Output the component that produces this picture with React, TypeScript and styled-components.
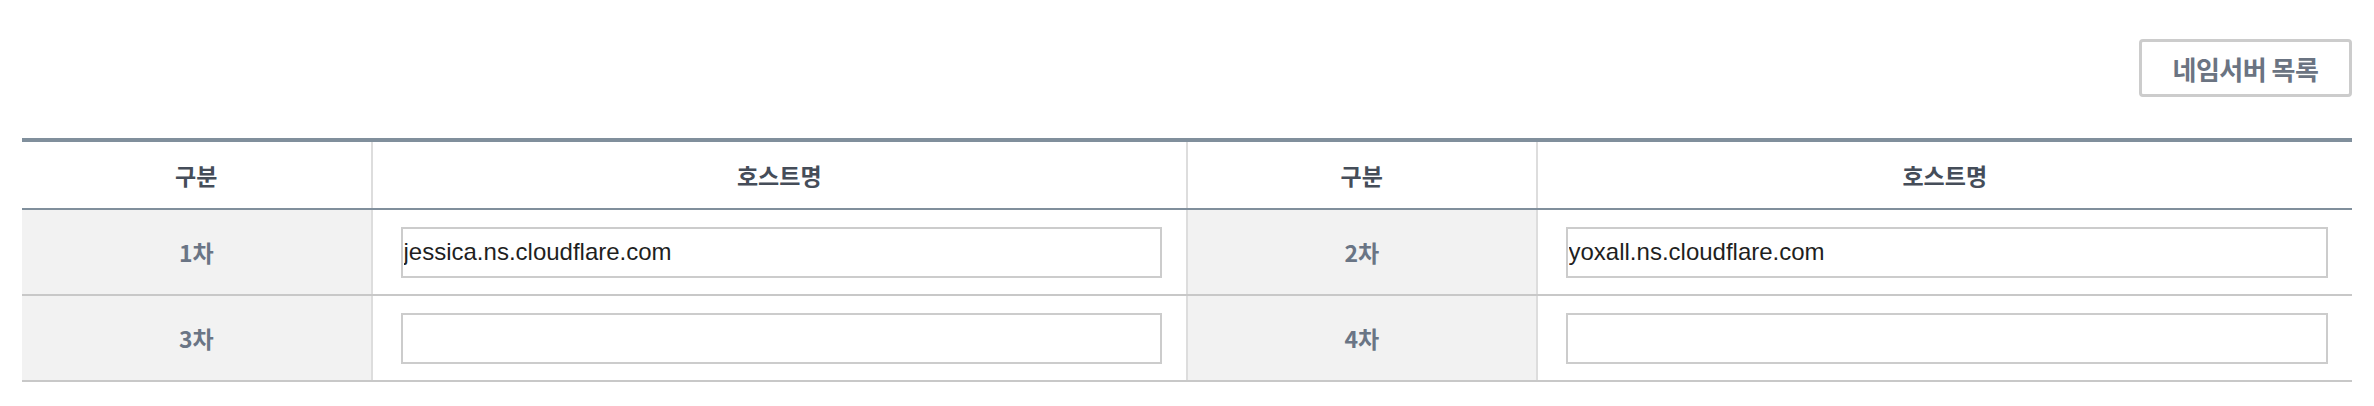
import React from "react";
import styled, { createGlobalStyle } from "styled-components";

const GlobalStyle = createGlobalStyle`
  html, body { margin: 0; padding: 0; background: #ffffff; }
  body { font-family: "Liberation Sans", "Noto Sans CJK KR", sans-serif; }
`;

const Page = styled.div`
  padding: 39px 22px 0 22px;
`;

const Toolbar = styled.div`
  display: flex;
  justify-content: flex-end;
  margin-bottom: 41px;
`;

const ListButton = styled.button`
  box-sizing: border-box;
  width: 213px;
  height: 58px;
  border: 3px solid #cccccc;
  border-radius: 4px;
  background: #ffffff;
  color: #6b7482;
  font-family: "Noto Sans CJK KR", sans-serif;
  font-weight: 700;
  font-size: 26px;
  letter-spacing: -0.5px;
  padding: 0;
  cursor: pointer;
`;

const Table = styled.table`
  width: 100%;
  border-collapse: collapse;
  table-layout: fixed;
  border-top: 4px solid #808f9c;
`;

const HeadCell = styled.th`
  height: 66px;
  padding: 0;
  background: #ffffff;
  border-bottom: 2px solid #808f9c;
  border-left: 2px solid #dddddd;
  color: #454d59;
  font-family: "Noto Sans CJK KR", sans-serif;
  font-weight: 700;
  font-size: 23px;
  text-align: center;
  vertical-align: middle;
  &:first-child { border-left: none; }
`;

const LabelCell = styled.td`
  height: 84px;
  padding: 0;
  background: #f2f2f2;
  border-bottom: 2px solid #c8c8c8;
  border-left: 2px solid #dddddd;
  color: #6a7585;
  font-family: "Noto Sans CJK KR", sans-serif;
  font-weight: 700;
  font-size: 23px;
  text-align: center;
  vertical-align: middle;
  &:first-child { border-left: none; }
`;

const FieldCell = styled.td`
  height: 84px;
  padding: 0 24px 0 28px;
  background: #ffffff;
  border-bottom: 2px solid #c8c8c8;
  border-left: 2px solid #dddddd;
  vertical-align: middle;
`;

const HostInput = styled.input`
  box-sizing: border-box;
  display: block;
  width: 100%;
  height: 51px;
  margin: 0;
  padding: 0 1px;
  border: 2px solid #cccccc;
  border-radius: 0;
  outline: none;
  background: #ffffff;
  color: #1f1f1f;
  font-family: "Liberation Sans", Arial, sans-serif;
  font-size: 24px;
`;

const rows: [string, string, string, string][] = [
  ["1차", "jessica.ns.cloudflare.com", "2차", "yoxall.ns.cloudflare.com"],
  ["3차", "", "4차", ""],
];

export default function App() {
  return (
    <>
      <GlobalStyle />
      <Page>
        <Toolbar>
          <ListButton type="button">네임서버 목록</ListButton>
        </Toolbar>
        <Table>
          <colgroup>
            <col style={{ width: "15%" }} />
            <col style={{ width: "35%" }} />
            <col style={{ width: "15%" }} />
            <col style={{ width: "35%" }} />
          </colgroup>
          <thead>
            <tr>
              <HeadCell>구분</HeadCell>
              <HeadCell>호스트명</HeadCell>
              <HeadCell>구분</HeadCell>
              <HeadCell>호스트명</HeadCell>
            </tr>
          </thead>
          <tbody>
            {rows.map((r) => (
              <tr key={r[0]}>
                <LabelCell>{r[0]}</LabelCell>
                <FieldCell>
                  <HostInput type="text" defaultValue={r[1]} />
                </FieldCell>
                <LabelCell>{r[2]}</LabelCell>
                <FieldCell>
                  <HostInput type="text" defaultValue={r[3]} />
                </FieldCell>
              </tr>
            ))}
          </tbody>
        </Table>
      </Page>
    </>
  );
}
